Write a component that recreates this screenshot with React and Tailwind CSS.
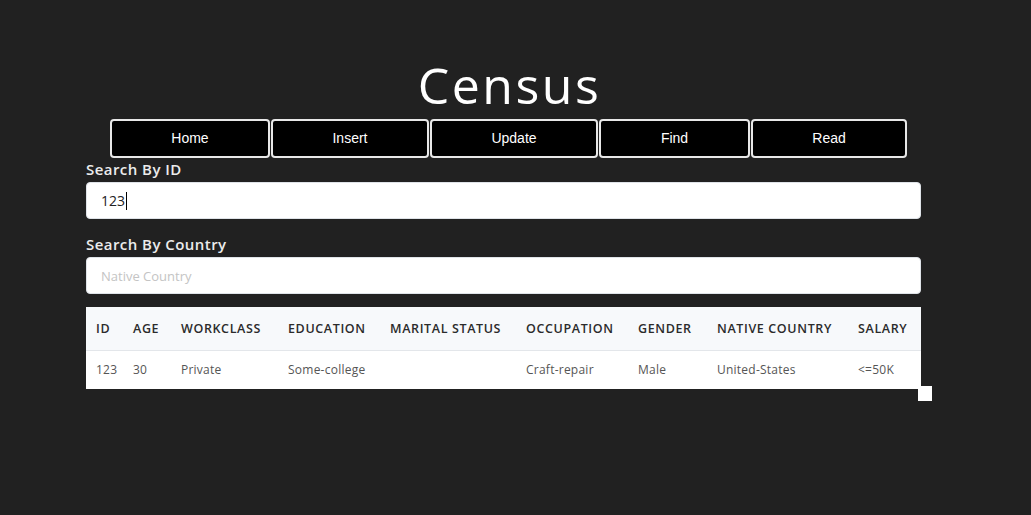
import React from "react";

const navItems = [
  { label: "Home", w: "w-[160px]" },
  { label: "Insert", w: "w-[158px]" },
  { label: "Update", w: "w-[168px]" },
  { label: "Find", w: "w-[151px]" },
  { label: "Read", w: "w-[156px]" },
];

const columns = [
  { key: "id", label: "ID", w: "w-[37px]" },
  { key: "age", label: "AGE", w: "w-[48px]" },
  { key: "workclass", label: "WORKCLASS", w: "w-[107px]" },
  { key: "education", label: "EDUCATION", w: "w-[102px]" },
  { key: "marital", label: "MARITAL STATUS", w: "w-[136px]" },
  { key: "occupation", label: "OCCUPATION", w: "w-[112px]" },
  { key: "gender", label: "GENDER", w: "w-[79px]" },
  { key: "country", label: "NATIVE COUNTRY", w: "w-[141px]" },
  { key: "salary", label: "SALARY", w: "w-[73px]" },
];

const rows = [
  {
    id: "123",
    age: "30",
    workclass: "Private",
    education: "Some-college",
    marital: "",
    occupation: "Craft-repair",
    gender: "Male",
    country: "United-States",
    salary: "<=50K",
  },
];

export default function App() {
  return (
    <div className="min-h-[515px] w-full bg-[#212121] font-['Open_Sans',sans-serif]">
      <h1 className="pt-[54px] text-center text-[50px] leading-[62px] font-normal tracking-[0.05em] text-white">
        <span className="ml-[-12px]">Census</span>
      </h1>

      {/* nav buttons */}
      <div className="ml-[110px] mt-[3px] flex gap-px">
        {navItems.map((item) => (
          <button
            key={item.label}
            className={`${item.w} h-[39px] rounded-[4px] border-2 border-[#e8e8e8] bg-black font-['Liberation_Sans',Arial,sans-serif] text-[14px] text-white`}
          >
            {item.label}
          </button>
        ))}
      </div>

      <div className="ml-[86px] w-[835px]">
        <label className="block text-[15px] font-semibold leading-[22px] tracking-[0.03em] text-[#ececec]">
          Search By ID
        </label>
        <div className="mt-[2px] flex h-[37px] items-center rounded-[4px] border border-[#dfe3e8] bg-white px-[14px]">
          <span className="text-[14px] text-[#222]">123</span>
          <span className="ml-px h-[18px] w-px bg-black" />
        </div>

        <label className="mt-[14px] block text-[15px] font-semibold leading-[22px] tracking-[0.03em] text-[#ececec]">
          Search By Country
        </label>
        <input
          className="mt-[2px] block h-[37px] w-full rounded-[4px] border border-[#dfe3e8] bg-white px-[14px] text-[13px] outline-none placeholder:text-[#c4c4c4]"
          placeholder="Native Country"
        />

        <div className="relative mt-[13px]">
          <table className="w-[835px] table-fixed border-collapse bg-white text-left">
            <thead>
              <tr className="h-[43px] border-b border-[#e3e6ea] bg-[#f7f9fb]">
                {columns.map((c) => (
                  <th
                    key={c.key}
                    className={`${c.w} pt-[3px] pl-[10px] text-[12.5px] font-semibold tracking-[0.05em] whitespace-nowrap text-[#2b2b2b]`}
                  >
                    {c.label}
                  </th>
                ))}
              </tr>
            </thead>
            <tbody>
              {rows.map((r) => (
                <tr key={r.id} className="h-[39px]">
                  {columns.map((c) => (
                    <td
                      key={c.key}
                      className="pl-[10px] text-[12px] tracking-[0.02em] whitespace-nowrap text-[#555]"
                    >
                      {r[c.key]}
                    </td>
                  ))}
                </tr>
              ))}
            </tbody>
          </table>
          {/* resize handle square */}
          <div className="absolute right-[-11px] bottom-[-12px] h-[15px] w-[14px] bg-white" />
        </div>
      </div>
    </div>
  );
}
